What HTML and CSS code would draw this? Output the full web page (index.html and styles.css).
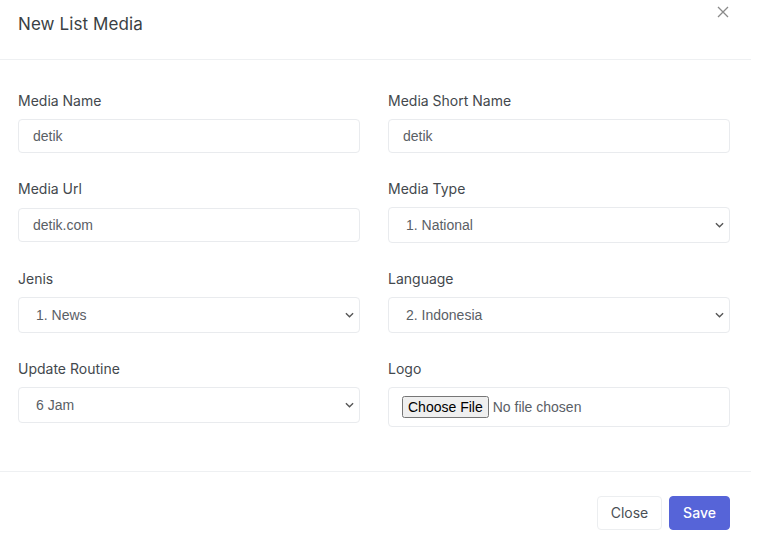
FILE: index.html
```html
<!DOCTYPE html>
<html>
<head>
<meta charset="utf-8">
<link rel="stylesheet" href="styles.css">
</head>
<body>
<div class="modal">
  <div class="modal-header">
    <h5 class="modal-title">New List Media</h5>
    <button class="btn-close" aria-label="Close">
      <svg width="12" height="12" viewBox="0 0 12 12"><path d="M1 1L11 11M11 1L1 11" stroke="#8a8a8a" stroke-width="1.3" fill="none"/></svg>
    </button>
  </div>
  <div class="modal-body">
    <div class="form-grid">
      <div class="field">
        <label class="label">Media Name</label>
        <input class="control" type="text" value="detik">
      </div>
      <div class="field">
        <label class="label">Media Short Name</label>
        <input class="control" type="text" value="detik">
      </div>
      <div class="field">
        <label class="label">Media Url</label>
        <input class="control control-offset" type="text" value="detik.com">
      </div>
      <div class="field">
        <label class="label">Media Type</label>
        <select class="control select"><option>1. National</option></select>
      </div>
      <div class="field">
        <label class="label">Jenis</label>
        <select class="control select"><option>1. News</option></select>
      </div>
      <div class="field">
        <label class="label">Language</label>
        <select class="control select"><option>2. Indonesia</option></select>
      </div>
      <div class="field">
        <label class="label">Update Routine</label>
        <select class="control select"><option>6 Jam</option></select>
      </div>
      <div class="field">
        <label class="label">Logo</label>
        <input class="control file" type="file">
      </div>
    </div>
  </div>
  <div class="modal-footer">
    <button class="btn btn-light">Close</button>
    <button class="btn btn-primary">Save</button>
  </div>
</div>
</body>
</html>
```
FILE: styles.css
```css
* { box-sizing: border-box; }
body {
  margin: 0;
  background: #fff;
  font-family: Inter, "Noto Sans", sans-serif;
  color: #343a40;
}
.modal {
  width: 751px;
  background: #fff;
}
.modal-header {
  height: 60px;
  border-bottom: 1px solid #eef0f2;
  display: flex;
  align-items: flex-start;
  justify-content: space-between;
  padding: 0 22px 0 18px;
}
.modal-title {
  margin: 12px 0 0;
  font-size: 17px;
  font-weight: 400;
  line-height: 24px;
  color: #3a3f44;
  letter-spacing: 0.1px;
}
.btn-close {
  margin-top: 6px;
  border: 0;
  background: none;
  padding: 0;
  width: 12px;
  height: 12px;
  display: flex;
}
.modal-body {
  padding: 31px 21px 44px 18px;
}
.form-grid {
  display: grid;
  grid-template-columns: 342px 342px;
  column-gap: 28px;
  row-gap: 26px;
}
.field {
  display: flex;
  flex-direction: column;
}
.label {
  font-size: 14px;
  line-height: 20px;
  margin-bottom: 8px;
  color: #43484d;
}
.control {
  width: 100%;
  height: 34px;
  border: 1px solid #e9ebee;
  border-radius: 4px;
  background: #fff;
  font-family: "Liberation Sans", Arial, sans-serif;
  font-size: 14px;
  color: #5a6066;
  padding: 0 14px;
}
.control-offset { margin: 1px 0; }
.select {
  height: 36px;
  padding: 0 30px 0 17px;
  appearance: none;
  -webkit-appearance: none;
  background-image: url("data:image/svg+xml,%3Csvg xmlns='http://www.w3.org/2000/svg' width='10' height='6' viewBox='0 0 10 6'%3E%3Cpath d='M1 1l4 4 4-4' fill='none' stroke='%23555' stroke-width='1.5'/%3E%3C/svg%3E");
  background-repeat: no-repeat;
  background-position: right 5px center;
  background-size: 9px 6px;
}
.file {
  height: 40px;
  padding: 8px 13px;
  color: #5a6066;
}
.file::file-selector-button {
  font-family: "Liberation Sans", Arial, sans-serif;
  font-size: 14px;
  padding: 1px 4px;
  margin-right: 4px;
}
.modal-footer {
  border-top: 1px solid #eef0f2;
  padding: 24px 21px 22px 0;
  display: flex;
  justify-content: flex-end;
  gap: 7px;
}
.btn {
  height: 34px;
  border-radius: 4px;
  font-family: Inter, "Noto Sans", sans-serif;
  font-size: 14px;
  padding: 0 10px 2px;
}
.btn-light {
  background: #fff;
  border: 1px solid #eceef0;
  color: #4a4f55;
  width: 65px;
}
.btn-primary {
  background: #5664d8;
  border: 1px solid #5664d8;
  color: #fff;
  font-weight: 500;
  width: 61px;
}
```
